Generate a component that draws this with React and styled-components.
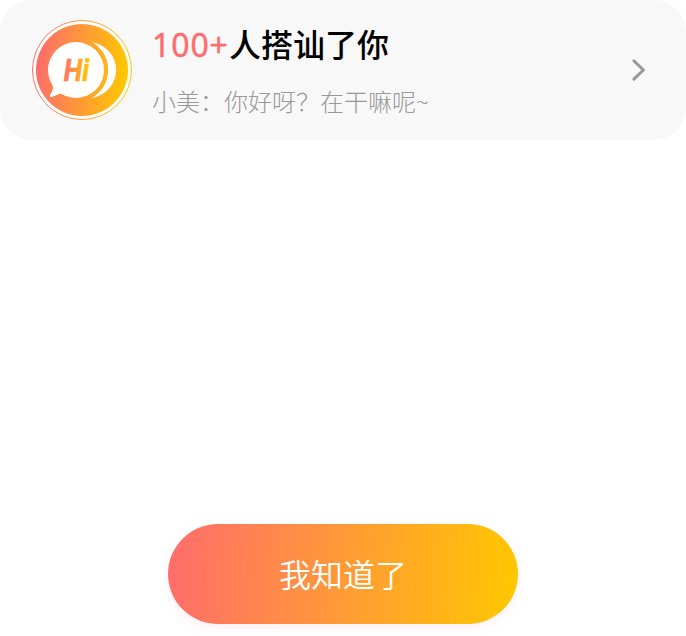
import React from "react";
import styled, { createGlobalStyle } from "styled-components";

const GlobalStyle = createGlobalStyle`
  * { box-sizing: border-box; }
  body {
    margin: 0;
    background: #fff;
    font-family: "Noto Sans CJK SC", sans-serif;
  }
`;

const Page = styled.main`
  display: flex;
  flex-direction: column;
  align-items: center;
  justify-content: space-between;
  width: 686px;
  height: 636px;
  padding-bottom: 12px;
  overflow: hidden;
`;

const Card = styled.section`
  display: flex;
  align-items: center;
  width: 100%;
  height: 140px;
  padding: 0 40px 0 32px;
  border-radius: 32px;
  background: #f8f8f8;
`;

const Avatar = styled.svg`
  flex: none;
  width: 100px;
  height: 100px;
`;

const Message = styled.div`
  flex: 1;
  display: flex;
  flex-direction: column;
  gap: 16px;
  padding: 0 0 2px 20px;
  white-space: nowrap;
`;

const Title = styled.h1`
  display: flex;
  align-items: baseline;
  margin: 0;
  color: #000;
  font-size: 32px;
  font-weight: 500;
  line-height: 48px;
  height: 48px;
`;

const Count = styled.span`
  width: 77px;
  color: #ff6c6c;
  font-family: "Noto Sans", sans-serif;
  font-size: 32px;
  font-weight: 400;
  letter-spacing: 0.9px;
  -webkit-text-stroke: 0.4px #ff6c6c;
`;

const Preview = styled.p`
  margin: 0;
  color: #999;
  font-size: 24px;
  font-weight: 300;
  line-height: 36px;
`;

const Chevron = styled.svg`
  flex: none;
  width: 16px;
  height: 24px;
`;

const Button = styled.button`
  width: 350px;
  height: 100px;
  padding: 0 0 3px;
  border: 0;
  border-radius: 50px;
  background: linear-gradient(95deg, #ff6c6c 0%, #ffc800 100%);
  box-shadow: 0 4px 12px rgba(255, 108, 160, 0.1);
  color: #fff;
  font-family: inherit;
  font-size: 32px;
  font-weight: 350;
  line-height: 48px;
`;

function GreetingIcon() {
  return (
    <Avatar viewBox="0 0 100 100" aria-hidden="true">
      <defs>
        <linearGradient id="disc" x1="0" y1="0.46" x2="1" y2="0.54">
          <stop offset="0" stopColor="#ff6c6c" />
          <stop offset="1" stopColor="#ffc800" />
        </linearGradient>
        <linearGradient id="greeting" x1="0" y1="0" x2="1" y2="0.1">
          <stop offset="0" stopColor="#ff6c6c" />
          <stop offset="1" stopColor="#ffc800" />
        </linearGradient>
      </defs>
      <circle cx="50" cy="50" r="49.5" fill="#fff" stroke="url(#disc)" />
      <circle cx="50" cy="50" r="46" fill="url(#disc)" />
      <circle cx="44" cy="50" r="28" fill="#fff" />
      <path d="M20.5 64.5Q21.8 68 20 71.5L17.9 75.2Q17.3 77.5 19.7 77L28 73.7Q31 73.4 34 76L40 66Z" fill="#fff" />
      <path d="M60.2 22.3A28 28 0 0 1 60.2 77.7A32 32 0 0 0 60.2 22.3Z" fill="#fff" />
      <text
        x="31.8"
        y="60.8"
        fill="url(#greeting)"
        stroke="url(#greeting)"
        strokeWidth="0.6"
        strokeLinejoin="round"
        fontFamily="Roboto, sans-serif"
        fontSize="31"
        fontWeight="700"
        fontStyle="italic"
        textLength="25.5"
        lengthAdjust="spacingAndGlyphs"
      >
        Hi
      </text>
    </Avatar>
  );
}

export default function App() {
  return (
    <>
      <GlobalStyle />
      <Page>
        <Card>
          <GreetingIcon />
          <Message>
            <Title>
              <Count>100+</Count>
              <span>人搭讪了你</span>
            </Title>
            <Preview>小美：你好呀？在干嘛呢~</Preview>
          </Message>
          <Chevron viewBox="0 0 16 24" aria-hidden="true">
            <path d="M3.9 2.8L13.4 12L3.9 21.2" fill="none" stroke="#999" strokeWidth="3" strokeLinecap="round" strokeLinejoin="round" />
          </Chevron>
        </Card>
        <Button type="button">我知道了</Button>
      </Page>
    </>
  );
}
